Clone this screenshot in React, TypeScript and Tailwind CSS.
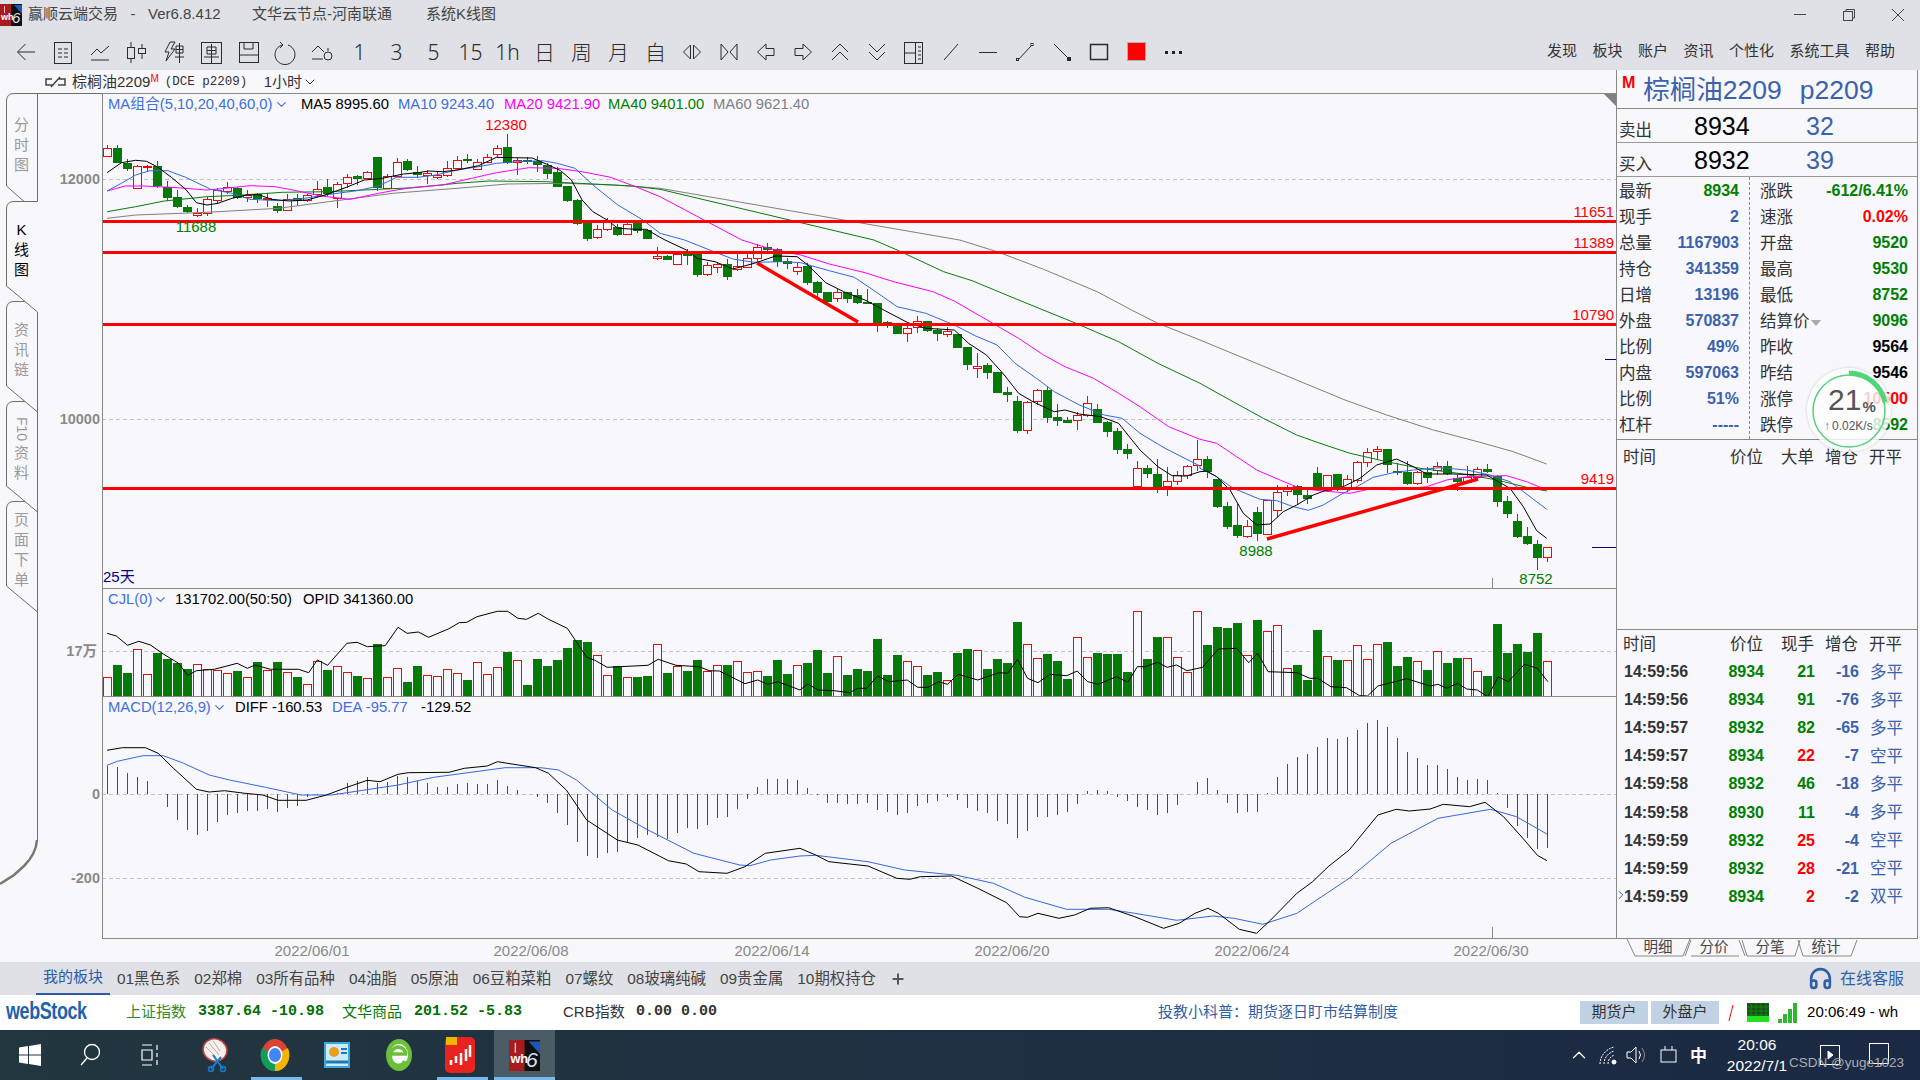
import { ChevronDown, ChevronRight, ChevronUp, Headphones, Plus } from 'lucide-react';

type Pt = [number, number];

// candle rows: body top, body bottom, wick top, wick bottom, 1 = red
const candlesA = [
  [145,167,135,170,1],[145,190,135,190,0],[190,207,178,212,0],[197,264,195,266,1],[197,200,195,212,1],[198,258,183,265,0],[260,293,243,303,0],[292,320,270,325,0],[321,335,315,338,0],[338,346,325,350,1],
  [298,338,290,348,1],[270,300,265,312,1],[262,272,247,282,1],[264,293,262,298,0],[285,290,270,305,1],[282,298,278,308,0],[294,298,278,322,1],[319,332,310,338,0],[298,331,282,332,1],[293,304,282,318,0],
  [284,301,282,305,1],[266,283,243,290,1],[262,283,238,288,0],[251,295,245,323,1],[230,250,223,265,1],[229,236,225,255,0],[217,235,212,238,1],[171,265,171,272,0],[227,265,222,268,1],[185,227,175,232,1],
  [183,209,178,212,0],[217,224,198,235,0],[218,224,210,252,1],[226,232,212,238,1],[204,226,183,232,1],[179,203,168,208,1],[178,183,163,188,0],[185,208,178,210,1],[170,185,163,190,1],[143,161,135,175,1],
  [142,190,102,192,0],[180,187,175,224,1],[179,186,172,192,0],[182,194,168,215,0],[194,221,190,238,0],[217,260,200,260,0],[258,303,258,305,0],[300,371,298,374,0],[370,416,366,423,0],[386,412,375,416,1],
  [365,388,355,392,1],[380,404,372,408,0],[372,403,368,406,1],[370,392,362,398,0],[390,416,388,418,0],
];
const candlesB = [
  [48,53,22,60,1],[48,60,45,60,0],[42,71,38,75,1],[36,48,28,75,0],[40,105,40,110,0],[76,103,65,107,1],[72,82,65,100,1],[72,110,58,120,0],[79,88,42,92,1],[55,80,40,85,1],
  [22,55,12,72,1],[22,30,10,38,0],[28,66,25,82,0],[63,71,55,88,0],[80,92,65,105,1],[78,129,70,135,0],[125,158,122,170,0],[155,185,155,190,0],[157,173,148,187,1],[156,177,155,190,0],
  [166,189,148,192,0],[185,192,148,192,0],[189,250,188,275,0],[246,253,244,265,0],[250,282,250,283,0],[263,280,250,305,1],[244,260,228,278,1],[243,273,243,275,0],[269,281,265,303,0],[274,281,262,290,1],
  [282,324,282,325,0],[321,375,320,390,0],[377,383,340,414,1],[375,399,370,416,0],[396,459,396,460,0],[457,465,440,486,0],[484,573,468,578,0],[487,569,482,582,1],[451,482,448,495,1],[450,534,440,548,0],
  [531,543,492,558,0],[540,549,530,550,0],[526,539,515,570,1],[490,526,468,530,1],[507,549,492,550,0],[546,575,542,590,0],[573,630,565,642,0],[627,641,612,656,0],[685,737,663,740,1],[684,702,676,714,0],
  [702,745,658,758,0],[724,737,682,768,1],[704,724,694,735,1],[679,704,675,716,1],[658,676,600,692,1],
];
const candlesC = [
  [177,215,168,234,0],[237,321,237,323,0],[318,381,306,387,0],[376,408,312,414,0],[379,407,360,414,1],[336,402,322,423,0],[300,402,300,405,1],[277,329,255,352,1],[262,273,255,287,1],[258,285,255,314,0],
  [285,296,268,312,0],[219,270,201,272,0],[226,270,226,275,1],[222,270,222,272,0],[238,262,225,275,1],[187,240,183,248,1],[155,187,144,200,1],[148,154,138,180,1],[147,194,147,218,0],[212,218,190,225,0],
  [215,252,184,254,0],[217,250,212,254,1],[217,233,202,249,0],[197,210,187,225,1],[198,222,184,224,0],[235,245,225,272,0],[230,245,198,250,1],[208,232,200,238,1],[208,216,192,220,0],[228,305,225,322,0],
  [303,342,288,354,0],[364,411,342,414,0],[408,432,380,435,0],[432,473,420,510,0],[442,472,440,486,1],
];
const candles = [
  ...candlesA.map((c) => [100 + c[0] / 3, 100 + c[1] / 3, 100 + c[2] / 3, 100 + c[3] / 3, c[4]]),
  ...candlesB.map((c) => [240 + c[0] / 3, 240 + c[1] / 3, 240 + c[2] / 3, 240 + c[3] / 3, c[4]]),
  ...candlesC.map((c) => [400 + c[0] / 3, 400 + c[1] / 3, 400 + c[2] / 3, 400 + c[3] / 3, c[4]]),
];

// volume bar tops, positive = red, negative = green
const vol = [
  292,-255,-279,208,283,-219,-237,-249,-267,253,268,270,280,-273,292,-246,270,-246,277,-291,313,243,-270,259,277,-288,295,-192,292,265,
  -306,-258,286,289,268,280,-300,247,283,262,-216,241,-315,-237,-258,-240,-204,-180,-186,226,286,-258,292,-291,-288,193,-279,258,-273,-240,
  273,256,-255,244,277,274,-288,-240,-282,256,-249,-210,-279,229,-285,-267,-273,-177,-285,-225,244,259,-285,-276,301,-219,-207,211,-267,-237,
  -249,-126,193,235,-222,-243,-297,172,232,-219,-222,-222,-276,94,-237,-171,172,232,276,94,-195,-141,-144,-129,226,-120,154,136,265,-255,
  -300,-150,229,-240,241,196,238,193,-186,-258,-231,244,-270,214,-249,-234,235,274,-288,-132,-219,-192,-216,-159,244,
];

const macd = [
  557,561,579,591,603,642,680,720,750,765,752,725,705,698,693,692,687,695,683,677,650,646,642,640,610,602,590,610,605,587,
  592,602,609,620,620,612,609,612,612,600,618,630,643,650,668,698,735,785,828,833,818,815,785,773,765,772,777,758,745,748,
  735,713,710,687,656,621,597,597,597,600,623,646,669,669,672,672,669,690,696,705,698,678,669,663,651,660,684,693,699,723,
  732,774,753,711,711,705,696,672,633,630,633,651,663,681,690,705,699,675,642,606,594,630,669,699,696,696,640,591,552,531,
  522,501,474,477,471,450,429,420,441,474,516,534,555,555,567,591,600,597,600,640,684,738,774,807,804,
];

const zA = ([x, y]: Pt): Pt => [100 + x / 2.8, 100 + y / 3];
const zB = ([x, y]: Pt): Pt => [640 + x / 2.8, 240 + y / 3];
const zC = ([x, y]: Pt): Pt => [1180 + x / 3, 400 + y / 3];
const zL = ([x, y]: Pt): Pt => [x / 1.96, 580 + y / 3];
const zR = ([x, y]: Pt): Pt => [800 + x / 1.912, 580 + y / 3];
const pts = (p: Pt[]) => p.map((q) => q[0].toFixed(1) + ',' + q[1].toFixed(1)).join(' ');

const ma5 = pts([
  ...([[20,218],[60,188],[100,181],[130,184],[160,200],[200,232],[240,268],[270,308],[300,315],[330,310],[370,295],[410,285],[445,284],[480,298],[530,303],[580,300],[630,285],[690,262],[740,240],[790,235],[850,222],[890,218],[920,213],[960,215],[1000,210],[1060,197],[1110,172],[1160,173],[1210,174],[1250,192],[1290,212],[1320,240],[1350,300],[1380,335],[1420,360],[1450,385],[1500,388],[1530,388],[1568,412]] as Pt[]).map(zA),
  ...([[70,0],[130,30],[160,55],[210,65],[260,87],[320,70],[380,48],[440,50],[470,75],[520,128],[570,155],[630,180],[700,220],[750,248],[800,265],[880,270],[920,310],[970,345],[1020,405],[1060,460],[1100,485],[1160,515],[1190,510],[1230,522],[1290,530],[1340,550],[1400,630],[1450,680],[1490,707],[1530,708],[1568,695]] as Pt[]).map(zB),
  ...([[80,213],[110,230],[150,270],[190,340],[230,375],[270,372],[310,335],[350,315],[400,285],[440,270],[490,260],[540,235],[590,195],[650,177],[700,200],[740,222],[820,222],[920,225],[990,265],[1030,320],[1070,392],[1100,415]] as Pt[]).map(zC),
]);
const ma10 = pts([
  ...([[20,273],[60,250],[100,225],[140,212],[190,212],[240,232],[310,268],[370,280],[420,298],[500,302],[560,297],[650,282],[720,272],[780,258],[830,232],[890,232],[940,225],[1000,210],[1060,200],[1110,190],[1170,185],[1240,182],[1280,190],[1330,205],[1380,255],[1450,315],[1520,360],[1568,400]] as Pt[]).map(zA),
  ...([[125,0],[200,32],[260,57],[320,67],[400,65],[450,68],[530,92],[600,112],[660,155],[720,200],[800,220],[880,255],[940,288],[1000,315],[1050,370],[1110,415],[1160,455],[1230,495],[1300,525],[1350,535],[1400,580],[1470,625],[1568,678]] as Pt[]).map(zB),
  ...([[60,205],[110,230],[160,265],[240,298],[290,302],[340,320],[385,331],[430,315],[480,285],[530,260],[580,232],[640,218],[700,210],[780,203],[860,210],[930,225],[990,245],[1050,290],[1100,328]] as Pt[]).map(zC),
]);
const ma20 = pts([
  ...([[20,273],[70,258],[120,258],[200,262],[300,270],[350,265],[420,257],[490,260],[550,272],[620,288],[700,298],[780,280],[830,270],[880,262],[960,255],[1040,235],[1110,218],[1200,203],[1280,205],[1350,215],[1430,232],[1500,260],[1568,290]] as Pt[]).map(zA),
  ...([[285,0],[360,25],[450,45],[530,72],[630,98],[710,125],[820,155],[880,183],[980,245],[1060,295],[1130,345],[1190,380],[1270,415],[1340,460],[1400,500],[1480,560],[1568,598]] as Pt[]).map(zB),
  ...([[110,130],[170,170],[230,210],[300,240],[360,265],[420,272],[510,280],[580,265],[640,270],[740,260],[800,240],[860,230],[980,227],[1040,245],[1100,270]] as Pt[]).map(zC),
]);
const ma40 = pts([
  ...([[20,335],[100,320],[180,303],[300,290],[400,285],[510,277],[640,275],[780,268],[880,263],[1000,250],[1090,243],[1250,245],[1380,252],[1490,258],[1568,268]] as Pt[]).map(zA),
  ...([[655,0],[720,30],[850,95],[930,122],[1060,180],[1210,245],[1340,305],[1450,370],[1568,430]] as Pt[]).map(zB),
  ...([[150,0],[250,55],[350,105],[420,130],[510,160],[620,185],[720,205],[850,222],[950,240],[1040,262],[1100,273]] as Pt[]).map(zC),
]);
const ma60 = pts([
  ...([[20,355],[100,345],[300,337],[500,325],[640,305],[820,280],[1000,265],[1140,252],[1300,250],[1440,255],[1568,265]] as Pt[]).map(zA),
  ...([[895,0],[1000,35],[1130,88],[1280,155],[1380,212],[1450,250],[1568,300]] as Pt[]).map(zB),
  ...([[495,0],[620,45],[760,90],[900,127],[1000,155],[1100,192]] as Pt[]).map(zC),
]);
const volLine = pts([
  ...([[210,160],[228,168],[250,196],[272,184],[295,195],[320,222],[350,250],[368,286],[385,272],[420,268],[465,250],[485,265],[500,255],[530,268],[585,268],[605,278],[622,240],[642,256],[680,190],[700,187],[720,200],[755,197],[780,142],[798,160],[820,156],[840,172],[880,146],[900,128],[915,127],[935,110],[975,94],[995,94],[1015,115],[1032,118],[1055,100],[1075,118],[1112,145],[1150,232],[1165,240],[1190,262],[1270,256],[1290,238],[1325,256],[1370,260],[1390,272],[1410,273],[1460,311],[1485,300],[1505,313],[1525,305],[1568,330]] as Pt[]).map(zL),
  ...([[15,312],[35,330],[65,332],[95,338],[110,325],[128,325],[148,288],[170,305],[205,300],[225,322],[245,322],[265,305],[282,313],[302,283],[340,300],[380,278],[397,280],[416,238],[435,295],[455,308],[478,283],[510,287],[530,273],[550,305],[570,313],[605,290],[627,307],[645,260],[660,260],[683,247],[702,262],[720,255],[740,272],[770,262],[800,207],[835,205],[858,248],[875,220],[895,275],[950,278],[975,295],[990,295],[1015,320],[1045,323],[1070,347],[1085,348],[1105,318],[1160,296],[1205,318],[1220,313],[1237,325],[1257,310],[1275,327],[1295,330],[1315,350],[1335,290],[1354,305],[1385,253],[1410,265],[1430,305]] as Pt[]).map(zR),
]);
const diff = pts([
  ...([[210,511],[240,503],[285,503],[310,520],[340,565],[385,628],[410,636],[440,632],[480,640],[515,645],[545,661],[600,661],[640,645],[680,622],[720,601],[745,605],[780,583],[800,578],[880,577],[910,565],[955,558],[975,545],[1050,563],[1075,580],[1110,630],[1150,720],[1190,760],[1210,780],[1250,795],[1310,842],[1345,852],[1370,875],[1425,880],[1460,860],[1500,820],[1568,805]] as Pt[]).map(zL),
  ...([[30,825],[55,845],[130,858],[185,895],[210,898],[230,890],[290,888],[340,925],[395,968],[420,1010],[435,1012],[455,1000],[495,1015],[525,1005],[555,985],[590,983],[640,1010],[695,1045],[725,1030],[755,1000],[780,985],[800,1000],[840,1048],[873,1060],[900,1020],[950,940],[980,905],[1010,860],[1050,810],[1105,705],[1140,688],[1165,693],[1205,687],[1230,673],[1280,680],[1310,667],[1345,710],[1385,780],[1410,826],[1428,842]] as Pt[]).map(zR),
]);
const dea = pts([
  ...([[210,556],[230,544],[280,527],[320,527],[360,550],[410,585],[450,600],[520,622],[590,645],[650,645],[780,615],[850,592],[990,563],[1060,563],[1095,570],[1130,600],[1200,690],[1270,750],[1360,820],[1450,855],[1470,857],[1510,840],[1568,828]] as Pt[]).map(zL),
  ...([[30,826],[130,845],[200,870],[300,886],[370,910],[430,952],[510,988],[590,988],[640,1000],[720,1021],[790,1008],[830,1015],[885,1033],[950,1000],[1050,895],[1130,790],[1220,715],[1320,688],[1370,710],[1428,762]] as Pt[]).map(zR),
]);

const RED = '#ff0000';
const GREEN = '#067a06';

function ChartSvg() {
  return (
    <svg width="1514" height="869" viewBox="102 93 1514 869" className="block">
      {[179.5, 419.5, 651.5, 794.5, 878.5].map((y) => (
        <line key={y} x1="102" x2="1616" y1={y} y2={y} stroke="#c4c4c8" strokeDasharray="4 3" />
      ))}
      <g shapeRendering="crispEdges">
        {candles.map((c, i) => {
          const x = 107 + 10 * i;
          const t = Math.round(c[0]);
          const b = Math.max(Math.round(c[1]), t + 1);
          const wt = Math.round(c[2]);
          const wb = Math.round(c[3]);
          if (c[4]) {
            return (
              <g key={i}>
                <line x1={x + 0.5} x2={x + 0.5} y1={wt} y2={t} stroke={RED} />
                <line x1={x + 0.5} x2={x + 0.5} y1={b} y2={wb} stroke={RED} />
                <rect x={x - 3.5} y={t + 0.5} width="8" height={b - t} fill="#f7f7fc" stroke={RED} />
              </g>
            );
          }
          return (
            <g key={i}>
              <line x1={x + 0.5} x2={x + 0.5} y1={wt} y2={wb} stroke={GREEN} />
              <rect x={x - 4} y={t} width="9" height={b - t} fill={GREEN} />
            </g>
          );
        })}
        {vol.map((v, i) => {
          const x = 107 + 10 * i;
          const top = Math.round(580 + Math.abs(v) / 3);
          return v > 0 ? (
            <rect key={i} x={x - 3.5} y={top + 0.5} width="8" height={696 - top} fill="#f7f7fc" stroke={RED} />
          ) : (
            <rect key={i} x={x - 4} y={top} width="9" height={696 - top} fill={GREEN} />
          );
        })}
        {macd.map((m, i) => {
          const x = 107 + 10 * i + 0.5;
          return <line key={i} x1={x} x2={x} y1="794" y2={Math.round(580 + m / 3)} stroke={m < 642 ? RED : GREEN} />;
        })}
      </g>
      <g fill="none" strokeLinejoin="round">
        <polyline points={ma60} stroke="#808080" />
        <polyline points={ma40} stroke="#0a7d0a" />
        <polyline points={ma20} stroke="#ff00ff" />
        <polyline points={ma10} stroke="#3568e0" />
        <polyline points={ma5} stroke="#000000" />
        <polyline points={volLine} stroke="#000000" />
        <polyline points={dea} stroke="#3568e0" />
        <polyline points={diff} stroke="#000000" />
      </g>
      <g shapeRendering="crispEdges" fill={RED}>
        <rect x="102" y="220" width="1514" height="3" />
        <rect x="102" y="251" width="1514" height="3" />
        <rect x="102" y="323" width="1514" height="3" />
        <rect x="102" y="487" width="1514" height="3" />
      </g>
      <line x1="757" y1="263" x2="858" y2="322" stroke={RED} strokeWidth="3.5" />
      <line x1="1267" y1="539" x2="1478" y2="479" stroke={RED} strokeWidth="3.5" />
      <g shapeRendering="crispEdges" stroke="#888888">
        <line x1="102" x2="1616" y1="588.5" y2="588.5" />
        <line x1="102" x2="1616" y1="696.5" y2="696.5" />
        <line x1="102" x2="1616" y1="938.5" y2="938.5" />
        <line x1="102.5" x2="102.5" y1="93" y2="939" />
        <line x1="102" x2="1616" y1="93.5" y2="93.5" />
        <line x1="1492.5" x2="1492.5" y1="578" y2="588" />
        <line x1="1492.5" x2="1492.5" y1="927" y2="938" />
        <line x1="1592" x2="1616" y1="547.5" y2="547.5" stroke="#000080" />
        <line x1="1605" x2="1616" y1="359.5" y2="359.5" stroke="#000080" />
      </g>
      <polygon points="1604,94 1616,94 1616,106" fill="#808080" />
      <g fontSize="15">
        <text x="506" y="130" textAnchor="middle" fill={RED}>12380</text>
        <text x="196" y="232" textAnchor="middle" fill="#008000">11688</text>
        <text x="1256" y="556" textAnchor="middle" fill="#008000">8988</text>
        <text x="1536" y="584" textAnchor="middle" fill="#008000">8752</text>
        <text x="1614" y="217" textAnchor="end" fill={RED}>11651</text>
        <text x="1614" y="248" textAnchor="end" fill={RED}>11389</text>
        <text x="1614" y="320" textAnchor="end" fill={RED}>10790</text>
        <text x="1614" y="484" textAnchor="end" fill={RED}>9419</text>
        <text x="103" y="582" fill="#000080">25天</text>
      </g>
      <g fontSize="15" fill="#888888" textAnchor="middle">
        <text x="312" y="956">2022/06/01</text>
        <text x="531" y="956">2022/06/08</text>
        <text x="772" y="956">2022/06/14</text>
        <text x="1012" y="956">2022/06/20</text>
        <text x="1252" y="956">2022/06/24</text>
        <text x="1491" y="956">2022/06/30</text>
      </g>
    </svg>
  );
}

function Legend({ top, items }: { top: string; items: { t: string; c: string; w: number; chev?: boolean }[] }) {
  return (
    <div className={'absolute left-[6px] flex items-center text-[14.8px] leading-[20px] whitespace-nowrap ' + top}>
      {items.map((it) => (
        <div key={it.t} className="flex items-center" style={{ width: it.w, color: it.c }}>
          {it.t}
          {it.chev && <ChevronDown size={15} strokeWidth={1.8} className="ml-[1px]" />}
        </div>
      ))}
    </div>
  );
}

const axisLabels = [
  { t: '12000', y: 179, r: 2 },
  { t: '10000', y: 419, r: 2 },
  { t: '17万', y: 651, r: 5 },
  { t: '0', y: 794, r: 2 },
  { t: '-200', y: 878, r: 2 },
];

function SideTab({ chars, active, className }: { chars: string[]; active?: boolean; className?: string }) {
  return (
    <div className={'flex h-[100px] w-[31px] flex-col items-center justify-center text-[15px] leading-[20px] ' + (active ? 'text-black ' : 'text-[#9a9a9a] ') + (className || '')}>
      {chars.map((c) =>
        c === 'F10' ? (
          <span key={c} className="[writing-mode:vertical-rl] text-[14px] leading-[16px] mb-[2px]">{c}</span>
        ) : (
          <span key={c}>{c}</span>
        ),
      )}
    </div>
  );
}

function Rail() {
  return (
    <div className="relative w-[102px] shrink-0">
      <svg width="102" height="869" viewBox="0 93 102 869" className="absolute left-0 top-0" fill="none" stroke="#6e6e6e">
        <path d="M37.5 201.5H24L6.5 186V101Q6.5 93.5 14 93.5H102" />
        <path d="M37.5 93.5V201.5" />
        <path d="M37.5 201.5H14Q6.5 201.5 6.5 209V286L37.5 312" />
        <path d="M25 301.5H14Q6.5 301.5 6.5 309V386L37.5 412V312" />
        <path d="M25 401.5H14Q6.5 401.5 6.5 409V486L37.5 512V412" />
        <path d="M25 501.5H14Q6.5 501.5 6.5 509V586L37.5 612V512" />
        <path d="M37.5 612V840" />
        <path d="M37 840Q36 854 24 866L14 875L0 884" strokeWidth="2.5" stroke="#777777" />
      </svg>
      <div className="relative ml-[6px] mt-[2px] flex flex-col">
        <SideTab chars={['分', '时', '图']} className="mb-[5px]" />
        <SideTab chars={['K', '线', '图']} active />
        <SideTab chars={['资', '讯', '链']} />
        <SideTab chars={['F10', '资', '料']} />
        <SideTab chars={['页', '面', '下', '单']} />
      </div>
      {axisLabels.map((a) => (
        <span key={a.t} className="absolute -translate-y-1/2 text-[14.5px] font-bold leading-none text-[#8a8a8a]" style={{ top: a.y - 93, right: a.r }}>
          {a.t}
        </span>
      ))}
    </div>
  );
}

function WhLogo({ size }: { size: number }) {
  return (
    <svg width={size} height={size} viewBox="0 0 22 22">
      <rect width="22" height="22" fill="#101010" />
      <rect width="11" height="22" fill="#a81c20" />
      <rect x="4" y="2" width="1" height="7" fill="#f0c0c0" />
      <path d="M14 1L22 1V10Z" fill="#1a58c0" />
      <text x="1" y="16" fontSize="9" fontWeight="700" fill="#ffffff">wh</text>
      <text x="12" y="19" fontSize="15" fontStyle="italic" fill="#d8e4ff">6</text>
    </svg>
  );
}

const icon = 'fill-none stroke-[#2b2b2b]';
const toolIcons: React.ReactNode[] = [
  <path d="M21 12H4M11.5 4L3.5 12L11.5 20" />,
  <g><rect x="3.5" y="2.5" width="17" height="21" /><path d="M7 9H11M13 9H17M7 13H11M13 13H17M7 17H11M13 17H17" /></g>,
  <path d="M3 15L9 9L13 13L21 6M3 20H21" />,
  <g><path d="M6 2V23M17 4V19" /><rect x="2.5" y="7.5" width="7" height="11" className="fill-[#dfe1e6]" /><rect x="13.5" y="8.5" width="7" height="5" className="fill-[#dfe1e6]" /></g>,
  <path d="M8 2H13L9 9H13L4 21L7 12H3ZM14 6H21V13H14ZM14 9.5H21M17.5 3V23M13 17H22" />,
  <g><rect x="2.5" y="2.5" width="20" height="21" /><path d="M8 7H17V14H8ZM8 10.5H17M12.5 4V23M5 17H20" /></g>,
  <g><rect x="3.5" y="2.5" width="19" height="20" /><path d="M8 3V9H17V3M3.5 15H22.5" /></g>,
  <path d="M9 5A10 10 0 1 0 15 5M7 2L10 5L7 8" />,
  <g><path d="M2 12L8 6L14 12M2 19H13" /><circle cx="18" cy="16" r="4" /><path d="M18 8V11" /></g>,
];
const toolText = ['1', '3', '5', '15', '1h', '日', '周', '月', '自'];
const toolIcons2: React.ReactNode[] = [
  <path d="M10.5 5L3.5 12L10.5 19ZM13.5 5L20.5 12L13.5 19Z" />,
  <path d="M4 4L11 12L4 20ZM20 4L13 12L20 20Z" />,
  <path d="M12 4L3.5 12L12 20V15.5H20V8.5H12Z" />,
  <path d="M12 4L20.5 12L12 20V15.5H4V8.5H12Z" />,
  <path d="M4 12L12 4L20 12M4 20L12 12L20 20" />,
  <path d="M4 4L12 12L20 4M4 12L12 20L20 12" />,
  <g><rect x="2.5" y="2.5" width="18" height="21" /><path d="M13.5 3V23M2.5 13H13.5M16 7H19M16 11H19M16 15H19M16 19H19" /></g>,
  <path d="M5 20L19 4" />,
  <path d="M3 12.5H21" />,
  <g><path d="M5 20L19 5" /><rect x="3.5" y="18.5" width="2" height="2" /><rect x="18" y="3.5" width="2" height="2" /></g>,
  <g><path d="M4 4L19 19" /><rect x="17.5" y="17.5" width="3" height="3" className="fill-[#2b2b2b]" /></g>,
  <rect x="3.5" y="4.5" width="17" height="15" strokeWidth="1.5" />,
];

function Toolbar() {
  return (
    <div className="flex h-[35px] items-center justify-between bg-[#dfe1e6] pl-[8px] pr-[25px]">
      <div className="flex">
        {toolIcons.map((n, i) => (
          <div key={i} className="flex h-[35px] w-[37px] items-center justify-center">
            <svg width="25" height="26" viewBox="0 0 25 26" className={icon}>{n}</svg>
          </div>
        ))}
        {toolText.map((t) => (
          <div key={t} className="flex h-[35px] w-[37px] items-center justify-center font-['Noto_Sans','Noto_Sans_CJK_SC',sans-serif] text-[21px] font-light text-[#2b2b2b]">
            {t}
          </div>
        ))}
        {toolIcons2.map((n, i) => (
          <div key={i} className="flex h-[35px] w-[37px] items-center justify-center">
            <svg width="25" height="26" viewBox="0 0 25 26" className={icon}>{n}</svg>
          </div>
        ))}
        <div className="flex h-[35px] w-[37px] items-center justify-center">
          <div className="mb-[2px] h-[19px] w-[19px] border border-[#b0b0b0] bg-[#ff0000]" />
        </div>
        <div className="flex h-[35px] w-[37px] items-center justify-center gap-[4px]">
          <div className="h-[3px] w-[3px] bg-[#222]" />
          <div className="h-[3px] w-[3px] bg-[#222]" />
          <div className="h-[3px] w-[3px] bg-[#222]" />
        </div>
      </div>
      <div className="flex gap-[15.5px] pb-[3px] text-[15px] text-[#333]">
        {['发现', '板块', '账户', '资讯', '个性化', '系统工具', '帮助'].map((t) => (
          <span key={t}>{t}</span>
        ))}
      </div>
    </div>
  );
}

const BLUE = 'text-[#3a62ac]';
const tableLeft = [
  ['最新', '8934', 'text-[#008000]'],
  ['现手', '2', BLUE],
  ['总量', '1167903', BLUE],
  ['持仓', '341359', BLUE],
  ['日增', '13196', BLUE],
  ['外盘', '570837', BLUE],
  ['比例', '49%', BLUE],
  ['内盘', '597063', BLUE],
  ['比例', '51%', BLUE],
  ['杠杆', '-----', BLUE],
];
const tableRight = [
  ['涨跌', '-612/6.41%', 'text-[#008000]'],
  ['速涨', '0.02%', 'text-[#ff0000]'],
  ['开盘', '9520', 'text-[#008000]'],
  ['最高', '9530', 'text-[#008000]'],
  ['最低', '8752', 'text-[#008000]'],
  ['结算价', '9096', 'text-[#008000]'],
  ['昨收', '9564', 'text-black'],
  ['昨结', '9546', 'text-black'],
  ['涨停', '10500', 'text-[#ff0000]'],
  ['跌停', '8592', 'text-[#008000]'],
];
const ticks = [
  ['14:59:56', '8934', '21', 0, '-16', '多平'],
  ['14:59:56', '8934', '91', 0, '-76', '多平'],
  ['14:59:57', '8932', '82', 0, '-65', '多平'],
  ['14:59:57', '8934', '22', 1, '-7', '空平'],
  ['14:59:58', '8932', '46', 0, '-18', '多平'],
  ['14:59:58', '8930', '11', 0, '-4', '多平'],
  ['14:59:59', '8932', '25', 1, '-4', '空平'],
  ['14:59:59', '8932', '28', 1, '-21', '空平'],
  ['14:59:59', '8934', '2', 1, '-2', '双平'],
];

function HeadRow({ third }: { third: string }) {
  return (
    <div className="grid h-[28px] grid-cols-[80px_60px_51px_44px_1fr] items-center pl-[6px] text-[16.5px] text-[#333]">
      <span>时间</span>
      <span className="text-right">价位</span>
      <span className="text-right">{third}</span>
      <span className="text-right">增仓</span>
      <span className="pl-[11px]">开平</span>
    </div>
  );
}

function InfoColumn({ rows, className }: { rows: string[][]; className: string }) {
  return (
    <div className={className}>
      {rows.map((r) => (
        <div key={r[0] + r[1]} className="flex h-[26px] items-center justify-between">
          <span className="flex items-center text-[16.5px] text-[#333]">
            {r[0]}
            {r[0] === '结算价' && <span className="ml-[1px] mt-[4px] h-0 w-0 border-x-[5px] border-t-[6px] border-x-transparent border-t-[#aaa]" />}
          </span>
          <span className={'text-[16px] font-bold ' + r[2]}>{r[1]}</span>
        </div>
      ))}
    </div>
  );
}

function SpeedWidget() {
  return (
    <div className="absolute left-[191px] top-[298px] h-[84px] w-[84px] rounded-full bg-white/80 shadow-[0_0_3px_rgba(0,0,0,0.2)]">
      <svg width="84" height="84" viewBox="0 0 84 84" className="absolute left-0 top-0" fill="none">
        <circle cx="42" cy="43" r="36" stroke="#56d07e" strokeWidth="1.5" />
        <path d="M42 5A37 37 0 0 1 78 34" stroke="#4fd67a" strokeWidth="5" />
      </svg>
      <div className="absolute left-[21px] top-[17px] flex items-end leading-none text-[#555]">
        <span className="text-[30px]">21</span>
        <span className="mb-[1px] ml-[1px] text-[15px] font-bold">%</span>
      </div>
      <div className="absolute left-[17px] top-[50px] flex items-center text-[12px] leading-[16px] text-[#555]">
        <span className="mr-[2px] font-bold text-[#2a8cff]">↑</span>
        0.02K/s
      </div>
    </div>
  );
}

function RightPanel() {
  return (
    <div className="relative w-[304px] shrink-0">
      <div className="h-[869px] w-[302px] border-r border-[#888] border-l pt-[2px]">
        <div className="flex h-[37px] items-start border-b border-[#888] pl-[5px]">
          <span className="mt-[2px] text-[16px] font-bold leading-[18px] text-[#ff0000]">M</span>
          <span className="ml-[8px] mt-[-1px] text-[26.5px] leading-[38px] text-[#3a62ac]">棕榈油2209</span>
          <span className="ml-[18px] mt-[-1px] text-[26.5px] leading-[38px] text-[#3a62ac]">p2209</span>
        </div>
        <div className="flex h-[34px] items-center border-b border-[#999] pl-[2px] pt-[3px]">
          <span className="w-[75px] pt-[7px] text-[16.5px] text-[#333]">卖出</span>
          <span className="w-[112px] text-[25px] text-black">8934</span>
          <span className="text-[25px] text-[#3a62ac]">32</span>
        </div>
        <div className="flex h-[34px] items-center border-b border-[#999] pl-[2px] pt-[3px]">
          <span className="w-[75px] pt-[7px] text-[16.5px] text-[#333]">买入</span>
          <span className="w-[112px] text-[25px] text-black">8932</span>
          <span className="text-[25px] text-[#3a62ac]">39</span>
        </div>
        <div className="flex h-[263px] border-b border-[#888]">
          <InfoColumn rows={tableLeft} className="w-[133px] border-r border-dashed border-[#888] pl-[2px] pr-[10px] pt-[1px]" />
          <InfoColumn rows={tableRight} className="flex-1 pl-[10px] pr-[9px] pt-[1px]" />
        </div>
        <div className="h-[190px] border-b border-[#888] pt-[3px]">
          <HeadRow third="大单" />
        </div>
        <div className="relative h-[309px] border-b border-[#888]">
          <HeadRow third="现手" />
          {ticks.map((r, i) => (
            <div key={i} className="grid h-[28.1px] grid-cols-[80px_60px_51px_44px_1fr] items-center pl-[7px] text-[16px] font-bold">
              <span className="relative text-[#333]">
                {i === 8 && <ChevronRight size={14} strokeWidth={1.6} className="absolute left-[-10px] top-[3px] text-[#2a4f9e]" />}
                {r[0]}
              </span>
              <span className="text-right text-[#008000]">{r[1]}</span>
              <span className={'text-right ' + (r[3] ? 'text-[#ff0000]' : 'text-[#008000]')}>{r[2]}</span>
              <span className="text-right text-[#3a62ac]">{r[4]}</span>
              <span className="pl-[11px] text-[16.5px] font-normal text-[#3a62ac]">{r[5]}</span>
            </div>
          ))}
        </div>
      </div>
      <div className="relative h-[23px]">
        <svg width="304" height="20" viewBox="1616 939 304 20" className="absolute left-0 top-0" fill="none" stroke="#888888">
          <path d="M1627 939L1635 956H1683L1690 939" />
          <path d="M1685 956L1691 940M1691 956H1739M1739 940L1745 956" />
          <path d="M1742 940L1747 956H1795L1800 940" />
          <path d="M1798 940L1803 956H1851L1857 940" />
        </svg>
        <div className="relative flex pl-[14px] text-[14.5px] leading-[17px] text-[#444]">
          {['明细', '分价', '分笔', '统计'].map((t) => (
            <span key={t} className="w-[56px] text-center">{t}</span>
          ))}
        </div>
      </div>
      <SpeedWidget />
    </div>
  );
}

function TaskIcons() {
  return (
    <div className="flex h-[50px] items-center">
      <div className="flex w-[60px] justify-center">
        <svg width="22" height="22" viewBox="0 0 22 22" fill="#ffffff">
          <path d="M0 3.5L9 2V10.5H0ZM10 1.9L22 0V10.5H10ZM0 11.5H9V20L0 18.5ZM10 11.5H22V22L10 20.1Z" />
        </svg>
      </div>
      <div className="flex w-[60px] justify-center">
        <svg width="22" height="24" viewBox="0 0 22 24" fill="none" stroke="#ffffff" strokeWidth="1.3">
          <circle cx="13" cy="9" r="7.5" />
          <path d="M8 15L2 22" />
        </svg>
      </div>
      <div className="flex w-[60px] justify-center">
        <svg width="22" height="24" viewBox="0 0 22 24" fill="none" stroke="#ffffff" strokeWidth="1.2">
          <path d="M3 2H13M3 22H13M3 7H13V17H3ZM18 2V7M18 10V14M18 17V22" />
        </svg>
      </div>
      <div className="flex w-[68px] justify-center">
        <svg width="30" height="36" viewBox="0 0 30 36">
          <ellipse cx="16" cy="13" rx="12" ry="11" transform="rotate(20 16 13)" fill="#f4f0ee" stroke="#c8423e" strokeWidth="1.5" />
          <path d="M10 6L20 18M14 4L21 14M7 10L17 20" stroke="#c8a0a0" />
          <path d="M14 18L24 32M22 20L12 32" stroke="#1a7cc8" strokeWidth="2" />
          <circle cx="12" cy="32" r="2.5" fill="none" stroke="#1a7cc8" strokeWidth="1.5" />
          <circle cx="24" cy="32" r="2.5" fill="none" stroke="#1a7cc8" strokeWidth="1.5" />
        </svg>
      </div>
      <div className="flex w-[54px] justify-center">
        <svg width="30" height="34" viewBox="0 0 30 34">
          <ellipse cx="15" cy="17" rx="13.5" ry="16" fill="#db4437" />
          <path d="M15 17L28 10A14 16 0 0 1 15 33Z" fill="#f4b400" />
          <path d="M15 17L15 33A14 16 0 0 1 2 10Z" fill="#0f9d58" />
          <ellipse cx="15" cy="17" rx="7.5" ry="9" fill="#ffffff" />
          <ellipse cx="15" cy="17" rx="6" ry="7" fill="#4285f4" />
        </svg>
      </div>
      <div className="flex w-[70px] justify-center">
        <svg width="28" height="30" viewBox="0 0 28 30">
          <rect x="1" y="2" width="26" height="26" fill="#38a8dc" />
          <rect x="3" y="4" width="22" height="22" fill="#cfeafa" />
          <circle cx="11" cy="12" r="5" fill="#e6a020" />
          <path d="M3 22H25" stroke="#1e78b8" strokeWidth="3" />
          <path d="M18 9H24M18 13H24" stroke="#1e78b8" strokeWidth="2" />
        </svg>
      </div>
      <div className="flex w-[54px] justify-center">
        <svg width="30" height="36" viewBox="0 0 30 36">
          <ellipse cx="15" cy="18" rx="13" ry="16" fill="#6cbf3c" />
          <ellipse cx="15" cy="18" rx="9" ry="11" fill="#ffffff" />
          <path d="M7 17H23M22 17A8 9 0 1 0 21 24" fill="none" stroke="#6cbf3c" strokeWidth="3.5" />
        </svg>
      </div>
      <div className="flex w-[68px] justify-center">
        <svg width="30" height="36" viewBox="0 0 30 36">
          <rect width="30" height="36" rx="5" fill="#e8231f" />
          <rect x="1" y="0" width="11" height="8" fill="#f4b400" />
          <path d="M6 28V23M11 26V19M16 28V16M21 24V12M25 20V8" stroke="#ffffff" strokeWidth="2.5" />
        </svg>
      </div>
      <div className="flex h-[50px] w-[61px] items-center justify-center bg-[#4b5c66]">
        <WhLogo size={31} />
      </div>
    </div>
  );
}

function Tray() {
  return (
    <div className="relative flex h-[50px] items-center pr-[31px] text-white">
      <ChevronUp size={22} strokeWidth={1.3} className="mr-[8px]" />
      <svg width="20" height="22" viewBox="0 0 20 22" fill="none" stroke="#ffffff" className="mr-[7px]">
        <path d="M2 20C2 12 8 5 16 3M6 20C6 14 10 9 16 7M10 20C10 16 12 13 16 11" strokeDasharray="2 1" />
        <circle cx="16" cy="18" r="2" fill="#ffffff" />
      </svg>
      <svg width="22" height="22" viewBox="0 0 22 22" fill="none" stroke="#ffffff" className="mr-[11px]">
        <path d="M2 8H6L11 3V19L6 14H2Z" />
        <path d="M14 7Q17 11 14 15" />
        <path d="M17 4Q22 11 17 18" stroke="#8a8f98" />
      </svg>
      <svg width="22" height="22" viewBox="0 0 22 22" fill="none" stroke="#ffffff" className="mr-[10px]">
        <rect x="3" y="6" width="15" height="12" />
        <path d="M7 2V6M14 2V6" />
      </svg>
      <span className="mr-[17px] font-['Noto_Sans_CJK_SC',sans-serif] text-[17px] font-bold">中</span>
      <div className="mr-[30px] flex w-[66px] flex-col items-center text-[15.5px] leading-[21px]">
        <span>20:06</span>
        <span>2022/7/1</span>
      </div>
      <svg width="20" height="20" viewBox="0 0 20 20" fill="none" stroke="#ffffff" className="mr-[29px]">
        <rect x="0.5" y="0.5" width="19" height="19" />
        <path d="M8 6L13 10L8 14Z" fill="#ffffff" />
      </svg>
      <svg width="20" height="24" viewBox="0 0 20 24" fill="none" stroke="#ffffff">
        <rect x="0.5" y="0.5" width="19" height="20" />
        <path d="M12 21V23" />
      </svg>
      <span className="absolute right-[16px] top-[23px] text-[13.5px] text-[#a9adb3]">CSDN @yuge1023</span>
    </div>
  );
}

export default function App() {
  return (
    <div className="flex h-[1080px] w-[1920px] flex-col overflow-hidden bg-[#f7f7fc] font-['Liberation_Sans','Noto_Sans_CJK_SC',sans-serif]">
      <div className="flex h-[35px] items-center justify-between bg-[#dfe1e6] pb-[6px] pr-[16px]">
        <div className="flex items-center text-[15px] text-[#444]">
          <WhLogo size={22} />
          <span className="ml-[6px] w-[224px] whitespace-pre">赢顺云端交易   -   Ver6.8.412</span>
          <span className="w-[174px]">文华云节点-河南联通</span>
          <span>系统K线图</span>
        </div>
        <div className="flex items-center">
          <div className="mr-[37px] h-[1px] w-[12px] bg-[#444]" />
          <svg width="12" height="12" viewBox="0 0 12 12" fill="none" stroke="#444" className="mr-[37px]">
            <rect x="0.5" y="2.5" width="9" height="9" />
            <path d="M3 2.5V0.5H11.5V9H9.5" />
          </svg>
          <svg width="12" height="12" viewBox="0 0 12 12" fill="none" stroke="#444">
            <path d="M0 0L12 12M12 0L0 12" />
          </svg>
        </div>
      </div>
      <Toolbar />

      <div className="flex h-[892px]">
        <div className="flex w-[1616px] shrink-0 flex-col">
          <div className="flex h-[23px] items-center pl-[45px] pt-[1px] text-[15px] text-[#333]">
            <svg width="21" height="12" viewBox="0 0 21 12" fill="none" stroke="#444" strokeWidth="1.5">
              <path d="M7 3H1V9H8M14 3H20V9H13M6 11L15 1" />
            </svg>
            <span className="ml-[6px]">棕榈油2209</span>
            <span className="mb-[6px] text-[10px] leading-none text-[#ff0000]">M</span>
            <span className="ml-[6px] w-[99px] font-['Liberation_Mono',monospace] text-[12.5px]">(DCE  p2209)</span>
            <span>1小时</span>
            <ChevronDown size={16} strokeWidth={1.5} />
          </div>
          <div className="flex">
            <Rail />
            <div className="relative w-[1514px]">
              <ChartSvg />
              <Legend
                top="top-[1px]"
                items={[
                  { t: 'MA组合(5,10,20,40,60,0)', c: '#3f6fe0', w: 193, chev: true },
                  { t: 'MA5 8995.60', c: '#000000', w: 97 },
                  { t: 'MA10 9243.40', c: '#3f6fe0', w: 106 },
                  { t: 'MA20 9421.90', c: '#ff00ff', w: 104 },
                  { t: 'MA40 9401.00', c: '#008000', w: 105 },
                  { t: 'MA60 9621.40', c: '#808080', w: 100 },
                ]}
              />
              <Legend
                top="top-[496px]"
                items={[
                  { t: 'CJL(0)', c: '#3f6fe0', w: 67, chev: true },
                  { t: '131702.00(50:50)', c: '#000000', w: 128 },
                  { t: 'OPID 341360.00', c: '#000000', w: 112 },
                ]}
              />
              <Legend
                top="top-[604px]"
                items={[
                  { t: 'MACD(12,26,9)', c: '#3f6fe0', w: 127, chev: true },
                  { t: 'DIFF -160.53', c: '#000000', w: 97 },
                  { t: 'DEA -95.77', c: '#3f6fe0', w: 89 },
                  { t: '-129.52', c: '#000000', w: 60 },
                ]}
              />
            </div>
          </div>
        </div>
        <RightPanel />
      </div>

      <div className="flex h-[33px] items-center justify-between bg-[#dfe1e6] pl-[36px] pr-[16px] text-[15.4px] text-[#444]">
        <div className="flex h-[33px] items-center gap-[14px]">
          <span className="flex h-[33px] w-[74px] items-center justify-center border-b-2 border-[#2a5aa8] text-[15px] text-[#2a5aa8]">我的板块</span>
          <span className="-ml-[7px]">01黑色系</span>
          <span>02郑棉</span>
          <span>03所有品种</span>
          <span>04油脂</span>
          <span>05原油</span>
          <span>06豆粕菜粕</span>
          <span>07螺纹</span>
          <span>08玻璃纯碱</span>
          <span>09贵金属</span>
          <span>10期权持仓</span>
          <Plus size={16} strokeWidth={3} className="text-[#555]" />
        </div>
        <div className="flex items-center gap-[7px] text-[16px] text-[#2f5fa8]">
          <Headphones size={25} strokeWidth={2.5} />
          在线客服
        </div>
      </div>

      <div className="flex h-[35px] items-center justify-between bg-white pr-[22px] text-[15px]">
        <div className="flex items-center">
          <div className="ml-[6px] w-[120px]">
            <span className="inline-block origin-left scale-x-[0.78] text-[23px] font-bold leading-none tracking-[-0.5px] text-[#1d62ad]">webStock</span>
          </div>
          <span className="w-[72px] text-[#2f8a2f]">上证指数</span>
          <span className="w-[144px] whitespace-pre font-['Liberation_Mono',monospace] text-[15px] font-bold text-[#007000]">3387.64 -10.98</span>
          <span className="w-[72px] text-[#007a00]">文华商品</span>
          <span className="w-[149px] whitespace-pre font-['Liberation_Mono',monospace] text-[15px] font-bold text-[#007000]">201.52 -5.83</span>
          <span className="w-[73px] text-[#333]">CRB指数</span>
          <span className="whitespace-pre font-['Liberation_Mono',monospace] text-[15px] font-bold text-[#333]">0.00 0.00</span>
        </div>
        <div className="flex items-center">
          <span className="mr-[182px] text-[#2f5fa8]">投教小科普：期货逐日盯市结算制度</span>
          <span className="flex h-[23px] w-[68px] items-center justify-center bg-[#c0d2e4] text-[#333]">期货户</span>
          <span className="ml-[3px] flex h-[23px] w-[68px] items-center justify-center bg-[#c0d2e4] text-[#333]">外盘户</span>
          <svg width="6" height="18" viewBox="0 0 6 18" className="ml-[9px]" stroke="#ff0000">
            <path d="M5 1L1 17" />
          </svg>
          <svg width="22" height="19" viewBox="0 0 22 19" className="ml-[13px]">
            <rect width="22" height="19" fill="#1d4d1d" />
            <rect y="13" width="22" height="6" fill="#22e022" />
            <path d="M0 4H22M0 8H22M0 12H22M4 0V13M9 0V13M14 0V13M19 0V13" stroke="#0b8a0b" />
          </svg>
          <svg width="20" height="20" viewBox="0 0 20 20" className="ml-[9px]" fill="#2fb82f">
            <rect x="0" y="16" width="4" height="4" />
            <rect x="5" y="11" width="4" height="9" />
            <rect x="10" y="6" width="4" height="14" />
            <rect x="15" y="0" width="4" height="20" />
          </svg>
          <span className="ml-[9px] text-black">20:06:49 - wh</span>
        </div>
      </div>

      <div className="relative flex h-[50px] items-center justify-between bg-gradient-to-r from-[#22363f] to-[#1b2944]">
        <TaskIcons />
        <Tray />
        <div className="absolute bottom-0 left-[251px] h-[3px] w-[51px] bg-[#76b9ed]" />
        <div className="absolute bottom-0 left-[437px] h-[3px] w-[51px] bg-[#76b9ed]" />
        <div className="absolute bottom-0 left-[494px] h-[3px] w-[61px] bg-[#76b9ed]" />
      </div>
    </div>
  );
}
